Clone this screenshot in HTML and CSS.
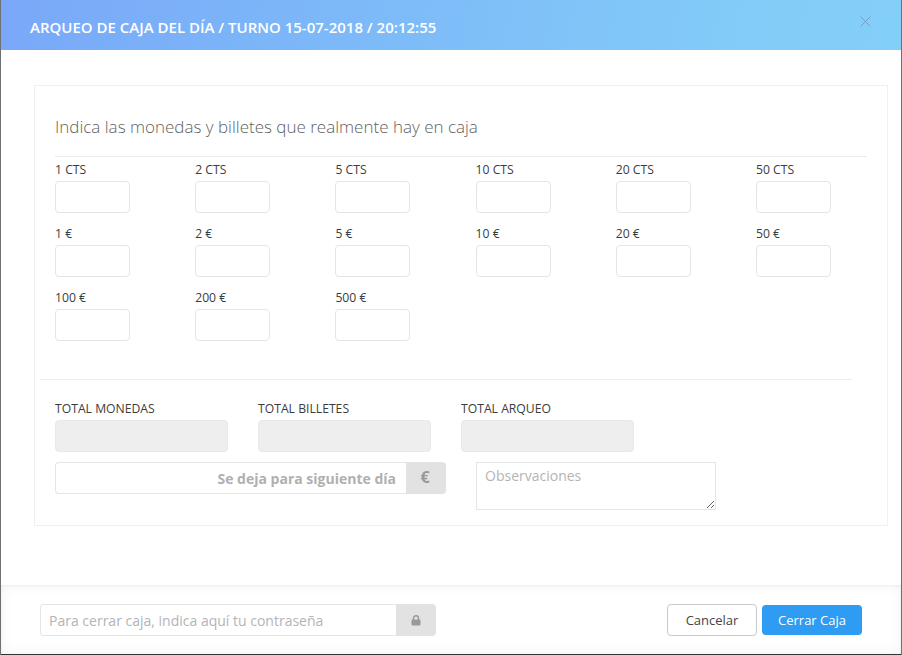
FILE: index.html
```html
<!DOCTYPE html>
<html lang="es">
<head>
<meta charset="utf-8">
<title>Arqueo de caja</title>
<link rel="stylesheet" href="styles.css">
</head>
<body>
<div class="modal">
  <header class="modal-header">
    <h1 class="modal-title">ARQUEO DE CAJA DEL DÍA / TURNO 15-07-2018 / 20:12:55</h1>
    <svg class="close" width="11" height="11" viewBox="0 0 11 11"><path d="M.5.5l10 10M10.5.5l-10 10" stroke="#6f9fc4" stroke-width="1" fill="none"/></svg>
  </header>
  <main class="modal-body">
    <section class="panel">
      <h2 class="panel-title">Indica las monedas y billetes que realmente hay en caja</h2>
      <div class="cash-grid">
        <div class="cell"><label class="lbl">1 CTS</label><input class="field"></div>
        <div class="cell"><label class="lbl">2 CTS</label><input class="field"></div>
        <div class="cell"><label class="lbl">5 CTS</label><input class="field"></div>
        <div class="cell"><label class="lbl">10 CTS</label><input class="field"></div>
        <div class="cell"><label class="lbl">20 CTS</label><input class="field"></div>
        <div class="cell"><label class="lbl">50 CTS</label><input class="field"></div>
        <div class="cell"><label class="lbl">1 €</label><input class="field"></div>
        <div class="cell"><label class="lbl">2 €</label><input class="field"></div>
        <div class="cell"><label class="lbl">5 €</label><input class="field"></div>
        <div class="cell"><label class="lbl">10 €</label><input class="field"></div>
        <div class="cell"><label class="lbl">20 €</label><input class="field"></div>
        <div class="cell"><label class="lbl">50 €</label><input class="field"></div>
        <div class="cell"><label class="lbl">100 €</label><input class="field"></div>
        <div class="cell"><label class="lbl">200 €</label><input class="field"></div>
        <div class="cell"><label class="lbl">500 €</label><input class="field"></div>
      </div>
      <hr class="divider">
      <div class="totals">
        <div class="total"><label class="lbl total-lbl">TOTAL MONEDAS</label><div class="total-box"></div></div>
        <div class="total"><label class="lbl total-lbl">TOTAL BILLETES</label><div class="total-box"></div></div>
        <div class="total"><label class="lbl total-lbl">TOTAL ARQUEO</label><div class="total-box"></div></div>
      </div>
      <div class="extra">
        <div class="group leave">
          <input class="group-input leave-input" placeholder="Se deja para siguiente día">
          <span class="addon euro">€</span>
        </div>
        <textarea class="notes" placeholder="Observaciones"></textarea>
      </div>
    </section>
  </main>
  <footer class="modal-footer">
    <div class="group pass">
      <input class="group-input pass-input" placeholder="Para cerrar caja, indica aquí tu contraseña">
      <span class="addon">
        <svg width="10" height="11" viewBox="0 0 10 11"><path d="M2.5 5V3.2a2.5 2.5 0 0 1 5 0V5" fill="none" stroke="#999" stroke-width="1.4"/><rect x="0.5" y="4.6" width="9" height="6" rx="1" fill="#999"/></svg>
      </span>
    </div>
    <div class="actions">
      <button class="btn btn-cancel">Cancelar</button>
      <button class="btn btn-primary">Cerrar Caja</button>
    </div>
  </footer>
</div>
</body>
</html>
```
FILE: styles.css
```css
* { box-sizing: border-box; }
html, body { margin: 0; height: 100%; }
body {
  width: 902px;
  height: 655px;
  overflow: hidden;
  background: #6e7073;
  font-family: "Open Sans", sans-serif;
  color: #3c3c3c;
}
.modal {
  width: 900px;
  height: 655px;
  margin-left: 1px;
  background: #fff;
  display: flex;
  flex-direction: column;
  border-bottom: 1px solid #333;
}
.modal-header {
  height: 50px;
  flex: none;
  padding: 0 30px 0 29px;
  display: flex;
  align-items: center;
  justify-content: space-between;
  background: linear-gradient(100deg, #79a8f8 0%, #82cdf8 85%, #82cff8 100%);
}
.modal-title {
  margin: 0;
  font-size: 15px;
  font-weight: 600;
  color: #fff;
  line-height: 20px;
  padding-top: 3px;
}
.close { margin-top: -7px; }
.modal-body { flex: 1; padding: 35px 13px 0 33px; }
.panel {
  width: 854px;
  height: 441px;
  border: 1px solid #eff1f1;
  padding: 30px 0 0 20px;
}
.panel-title {
  margin: 0;
  width: 812px;
  padding-bottom: 18px;
  border-bottom: 1px solid #eaecec;
  font-size: 17px;
  font-weight: 300;
  line-height: 22px;
  color: #5f5f5f;
}
.cash-grid {
  display: grid;
  grid-template-columns: repeat(6, 140.2px);
  row-gap: 13px;
  margin-top: 5px;
}
.cell { display: flex; flex-direction: column; gap: 3px; align-items: flex-start; }
.lbl { font-size: 12.2px; line-height: 16px; color: #3c3c3c; }
.field {
  width: 75px;
  height: 32px;
  border: 1px solid #e4e6e6;
  border-radius: 4px;
  background: #fff;
}
.divider {
  width: 812px;
  height: 1px;
  border: 0;
  background: #eceeee;
  margin: 38px 0 20px -15px;
}
.totals { display: flex; gap: 30px; }
.total { width: 173px; display: flex; flex-direction: column; gap: 3px; }
.total-lbl { padding-top: 1px; height: 17px; }
.total-box { height: 32px; background: #eee; border: 1px solid #e9e9e9; border-radius: 4px; }
.extra { display: flex; margin-top: 10px; align-items: flex-start; gap: 30px; }
.group { display: flex; height: 32px; }
.leave { width: 391px; }
.pass { width: 396px; }
.group-input {
  flex: 1;
  min-width: 0;
  height: 32px;
  border: 1px solid #e4e6e6;
  border-right: 0;
  border-radius: 4px 0 0 4px;
  padding: 0 8px;
  font-family: inherit;
  font-size: 14px;
  background: #fff;
}
.leave-input { text-align: right; font-weight: 700; padding-right: 10px; }
.group-input::placeholder { color: #b4b4b4; opacity: 1; }
.leave-input::placeholder { color: #b0b0b0; }
.addon {
  width: 40px;
  flex: none;
  display: flex;
  align-items: center;
  justify-content: center;
  background: #e2e2e2;
  border-radius: 0 4px 4px 0;
  color: #999;
  font-size: 16px;
  font-weight: 700;
}
.euro { padding: 0 2px 3px 0; }
.notes {
  width: 240px;
  height: 48px;
  border: 1px solid #e4e6e6;
  border-radius: 0;
  padding: 3px 8px;
  font-family: inherit;
  font-size: 14px;
  line-height: 20px;
  margin: 0;
  background: #fff;
}
.notes::placeholder { color: #b4b4b4; opacity: 1; }
.modal-footer {
  height: 69px;
  flex: none;
  padding: 19px 39px 0 39px;
  display: flex;
  align-items: flex-start;
  justify-content: space-between;
  background: #fff;
  box-shadow: inset 0 0 14px rgba(0, 0, 0, .05), inset 0 1px 3px rgba(0, 0, 0, .05);
}
.actions { display: flex; gap: 5px; align-items: center; height: 32px; }
.btn { font-family: inherit; font-size: 13px; border-radius: 4px; padding: 0; }
.btn-cancel { width: 90px; height: 32px; background: #fff; border: 1px solid #c8c8c8; color: #444; }
.btn-primary { width: 100px; height: 30px; background: #2d9cf2; border: 0; color: #fff; }
```
